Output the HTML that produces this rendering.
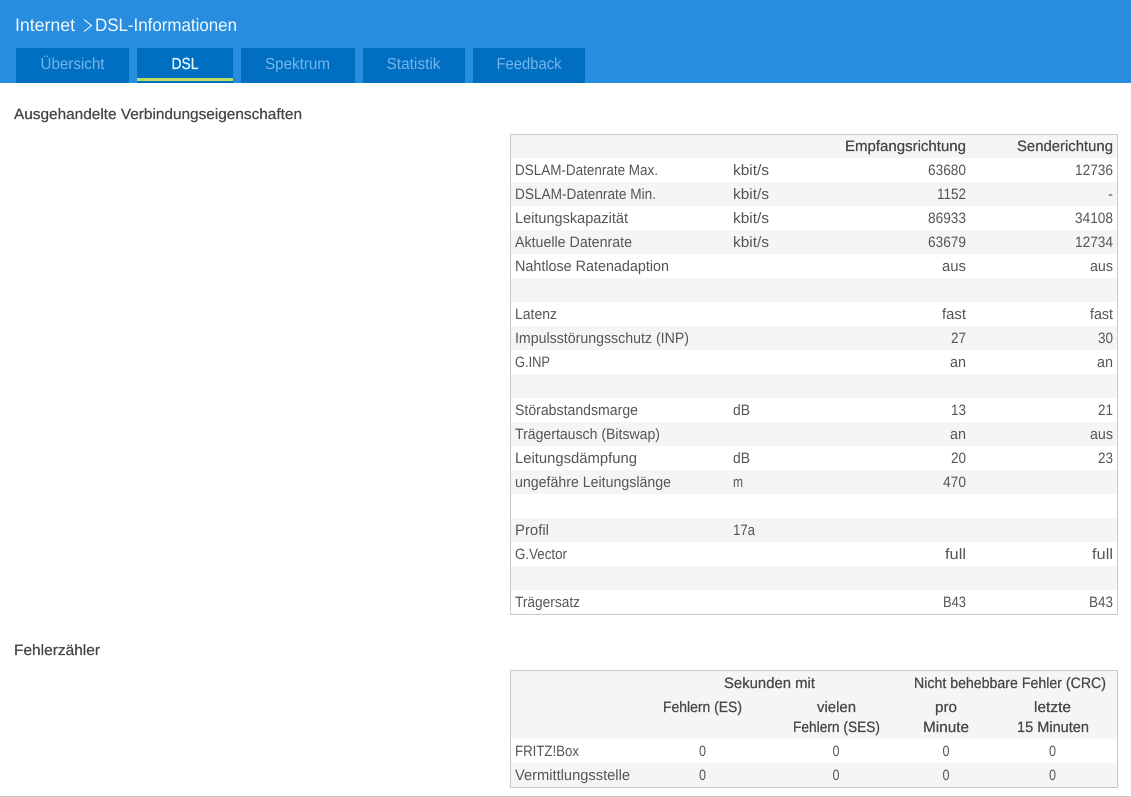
<!DOCTYPE html>
<html lang="de"><head><meta charset="utf-8"><title>DSL-Informationen</title>
<style>
html,body{margin:0;padding:0;background:#fff;width:1131px;height:797px;overflow:hidden}
svg{display:block}
text{font-family:"Liberation Sans",sans-serif;font-size:15px;fill:#555;text-rendering:geometricPrecision}
.e{text-anchor:end}
.m{text-anchor:middle}
.h{fill:#444;stroke:#444;stroke-width:.25px}
.t{font-size:18px;fill:#f2f9fd}
.tab{font-size:16px;fill:#74b5ea;text-anchor:middle}
</style></head><body>
<svg width="1131" height="797" viewBox="0 0 1131 797" xmlns="http://www.w3.org/2000/svg">
<rect width="1131" height="83" fill="#288ddf"/>
<text class="t" x="15" y="31" textLength="60" lengthAdjust="spacingAndGlyphs">Internet</text>
<path d="M84 19.5L91.5 25.5L84 31.5" fill="none" stroke="#eef7fc" stroke-width="1.1"/>
<text class="t" x="95" y="31" textLength="142" lengthAdjust="spacingAndGlyphs">DSL-Informationen</text>
<rect x="16" y="48" width="113" height="35" fill="#006ec1"/>
<rect x="137" y="48" width="96" height="35" fill="#006ec1"/>
<rect x="137" y="78" width="96" height="3" fill="#bcdc62"/>
<rect x="241" y="48" width="114" height="35" fill="#006ec1"/>
<rect x="363" y="48" width="102" height="35" fill="#006ec1"/>
<rect x="473" y="48" width="112" height="35" fill="#006ec1"/>
<text class="tab" x="72.5" y="69" textLength="64" lengthAdjust="spacingAndGlyphs">Übersicht</text>
<text class="tab" x="185" y="69" textLength="27" lengthAdjust="spacingAndGlyphs" style="fill:#e6f8fc;stroke:#e6f8fc;stroke-width:.3px">DSL</text>
<text class="tab" x="297.5" y="69" textLength="65" lengthAdjust="spacingAndGlyphs">Spektrum</text>
<text class="tab" x="413.5" y="69" textLength="54" lengthAdjust="spacingAndGlyphs">Statistik</text>
<text class="tab" x="529" y="69" textLength="65" lengthAdjust="spacingAndGlyphs">Feedback</text>

<text class="h" x="14" y="119" textLength="288" lengthAdjust="spacingAndGlyphs">Ausgehandelte Verbindungseigenschaften</text>

<rect x="510.5" y="134.5" width="607" height="480" fill="#fff" stroke="#c8c8c6"/>
<g fill="#f5f6f4">
<rect x="511" y="135" width="606" height="23"/>
<rect x="511" y="182" width="606" height="24"/>
<rect x="511" y="230" width="606" height="24"/>
<rect x="511" y="278" width="606" height="24"/>
<rect x="511" y="326" width="606" height="24"/>
<rect x="511" y="374" width="606" height="24"/>
<rect x="511" y="422" width="606" height="24"/>
<rect x="511" y="470" width="606" height="24"/>
<rect x="511" y="518" width="606" height="24"/>
<rect x="511" y="566" width="606" height="24"/>
</g>
<text class="h e" x="966" y="151" textLength="121" lengthAdjust="spacingAndGlyphs">Empfangsrichtung</text>
<text class="h e" x="1113" y="151" textLength="96" lengthAdjust="spacingAndGlyphs">Senderichtung</text>

<text x="515" y="175" textLength="143" lengthAdjust="spacingAndGlyphs">DSLAM-Datenrate Max.</text>
<text x="733" y="175" textLength="36" lengthAdjust="spacingAndGlyphs">kbit/s</text>
<text class="e" x="966" y="175" textLength="38" lengthAdjust="spacingAndGlyphs">63680</text>
<text class="e" x="1113" y="175" textLength="38" lengthAdjust="spacingAndGlyphs">12736</text>

<text x="515" y="199" textLength="141" lengthAdjust="spacingAndGlyphs">DSLAM-Datenrate Min.</text>
<text x="733" y="199" textLength="36" lengthAdjust="spacingAndGlyphs">kbit/s</text>
<text class="e" x="966" y="199" textLength="29" lengthAdjust="spacingAndGlyphs">1152</text>
<text class="e" x="1113" y="199">-</text>

<text x="515" y="223" textLength="113" lengthAdjust="spacingAndGlyphs">Leitungskapazität</text>
<text x="733" y="223" textLength="36" lengthAdjust="spacingAndGlyphs">kbit/s</text>
<text class="e" x="966" y="223" textLength="38" lengthAdjust="spacingAndGlyphs">86933</text>
<text class="e" x="1113" y="223" textLength="38" lengthAdjust="spacingAndGlyphs">34108</text>

<text x="515" y="247" textLength="117" lengthAdjust="spacingAndGlyphs">Aktuelle Datenrate</text>
<text x="733" y="247" textLength="36" lengthAdjust="spacingAndGlyphs">kbit/s</text>
<text class="e" x="966" y="247" textLength="38" lengthAdjust="spacingAndGlyphs">63679</text>
<text class="e" x="1113" y="247" textLength="38" lengthAdjust="spacingAndGlyphs">12734</text>

<text x="515" y="271" textLength="154" lengthAdjust="spacingAndGlyphs">Nahtlose Ratenadaption</text>
<text class="e" x="966" y="271" textLength="24" lengthAdjust="spacingAndGlyphs">aus</text>
<text class="e" x="1113" y="271" textLength="23" lengthAdjust="spacingAndGlyphs">aus</text>

<text x="515" y="319" textLength="42" lengthAdjust="spacingAndGlyphs">Latenz</text>
<text class="e" x="966" y="319" textLength="24" lengthAdjust="spacingAndGlyphs">fast</text>
<text class="e" x="1113" y="319" textLength="23" lengthAdjust="spacingAndGlyphs">fast</text>

<text x="515" y="343" textLength="174" lengthAdjust="spacingAndGlyphs">Impulsstörungsschutz (INP)</text>
<text class="e" x="966" y="343" textLength="15" lengthAdjust="spacingAndGlyphs">27</text>
<text class="e" x="1113" y="343" textLength="15" lengthAdjust="spacingAndGlyphs">30</text>

<text x="515" y="367" textLength="35" lengthAdjust="spacingAndGlyphs">G.INP</text>
<text class="e" x="966" y="367" textLength="16" lengthAdjust="spacingAndGlyphs">an</text>
<text class="e" x="1113" y="367" textLength="16" lengthAdjust="spacingAndGlyphs">an</text>

<text x="515" y="415" textLength="123" lengthAdjust="spacingAndGlyphs">Störabstandsmarge</text>
<text x="733" y="415" textLength="17" lengthAdjust="spacingAndGlyphs">dB</text>
<text class="e" x="966" y="415" textLength="15" lengthAdjust="spacingAndGlyphs">13</text>
<text class="e" x="1113" y="415" textLength="15" lengthAdjust="spacingAndGlyphs">21</text>

<text x="515" y="439" textLength="145" lengthAdjust="spacingAndGlyphs">Trägertausch (Bitswap)</text>
<text class="e" x="966" y="439" textLength="16" lengthAdjust="spacingAndGlyphs">an</text>
<text class="e" x="1113" y="439" textLength="23" lengthAdjust="spacingAndGlyphs">aus</text>

<text x="515" y="463" textLength="122" lengthAdjust="spacingAndGlyphs">Leitungsdämpfung</text>
<text x="733" y="463" textLength="17" lengthAdjust="spacingAndGlyphs">dB</text>
<text class="e" x="966" y="463" textLength="15" lengthAdjust="spacingAndGlyphs">20</text>
<text class="e" x="1113" y="463" textLength="15" lengthAdjust="spacingAndGlyphs">23</text>

<text x="515" y="487" textLength="156" lengthAdjust="spacingAndGlyphs">ungefähre Leitungslänge</text>
<text x="733" y="487" textLength="10" lengthAdjust="spacingAndGlyphs">m</text>
<text class="e" x="966" y="487" textLength="23" lengthAdjust="spacingAndGlyphs">470</text>

<text x="515" y="535" textLength="34" lengthAdjust="spacingAndGlyphs">Profil</text>
<text x="733" y="535" textLength="22" lengthAdjust="spacingAndGlyphs">17a</text>

<text x="515" y="559" textLength="52" lengthAdjust="spacingAndGlyphs">G.Vector</text>
<text class="e" x="966" y="559" textLength="21" lengthAdjust="spacingAndGlyphs">full</text>
<text class="e" x="1113" y="559" textLength="21" lengthAdjust="spacingAndGlyphs">full</text>

<text x="515" y="607" textLength="65" lengthAdjust="spacingAndGlyphs">Trägersatz</text>
<text class="e" x="966" y="607" textLength="23" lengthAdjust="spacingAndGlyphs">B43</text>
<text class="e" x="1113" y="607" textLength="24" lengthAdjust="spacingAndGlyphs">B43</text>

<text class="h" x="14" y="655" textLength="86" lengthAdjust="spacingAndGlyphs">Fehlerzähler</text>

<rect x="510.5" y="670.5" width="607" height="117" fill="#fff" stroke="#c8c8c6"/>
<rect x="511" y="671" width="606" height="68" fill="#f5f6f4"/>
<rect x="511" y="763" width="606" height="24" fill="#f5f6f4"/>
<text class="h m" x="769.5" y="688" textLength="91" lengthAdjust="spacingAndGlyphs">Sekunden mit</text>
<text class="h m" x="1010" y="688" textLength="192" lengthAdjust="spacingAndGlyphs">Nicht behebbare Fehler (CRC)</text>
<text class="h m" x="702.5" y="712" textLength="79" lengthAdjust="spacingAndGlyphs">Fehlern (ES)</text>
<text class="h m" x="836.5" y="712" textLength="39" lengthAdjust="spacingAndGlyphs">vielen</text>
<text class="h m" x="836.5" y="732" textLength="87" lengthAdjust="spacingAndGlyphs">Fehlern (SES)</text>
<text class="h m" x="946" y="712" textLength="22" lengthAdjust="spacingAndGlyphs">pro</text>
<text class="h m" x="946" y="732" textLength="46" lengthAdjust="spacingAndGlyphs">Minute</text>
<text class="h m" x="1052.5" y="712" textLength="37" lengthAdjust="spacingAndGlyphs">letzte</text>
<text class="h m" x="1053" y="732" textLength="72" lengthAdjust="spacingAndGlyphs">15 Minuten</text>

<text x="515" y="756" textLength="64" lengthAdjust="spacingAndGlyphs">FRITZ!Box</text>
<text class="m" x="702.5" y="756" textLength="7" lengthAdjust="spacingAndGlyphs">0</text>
<text class="m" x="836" y="756" textLength="7" lengthAdjust="spacingAndGlyphs">0</text>
<text class="m" x="946" y="756" textLength="7" lengthAdjust="spacingAndGlyphs">0</text>
<text class="m" x="1052.5" y="756" textLength="7" lengthAdjust="spacingAndGlyphs">0</text>
<text x="515" y="780" textLength="115" lengthAdjust="spacingAndGlyphs">Vermittlungsstelle</text>
<text class="m" x="702.5" y="780" textLength="7" lengthAdjust="spacingAndGlyphs">0</text>
<text class="m" x="836" y="780" textLength="7" lengthAdjust="spacingAndGlyphs">0</text>
<text class="m" x="946" y="780" textLength="7" lengthAdjust="spacingAndGlyphs">0</text>
<text class="m" x="1052.5" y="780" textLength="7" lengthAdjust="spacingAndGlyphs">0</text>

<rect x="0" y="796" width="1131" height="1" fill="#c8c8c8"/>
</svg>
</body></html>
